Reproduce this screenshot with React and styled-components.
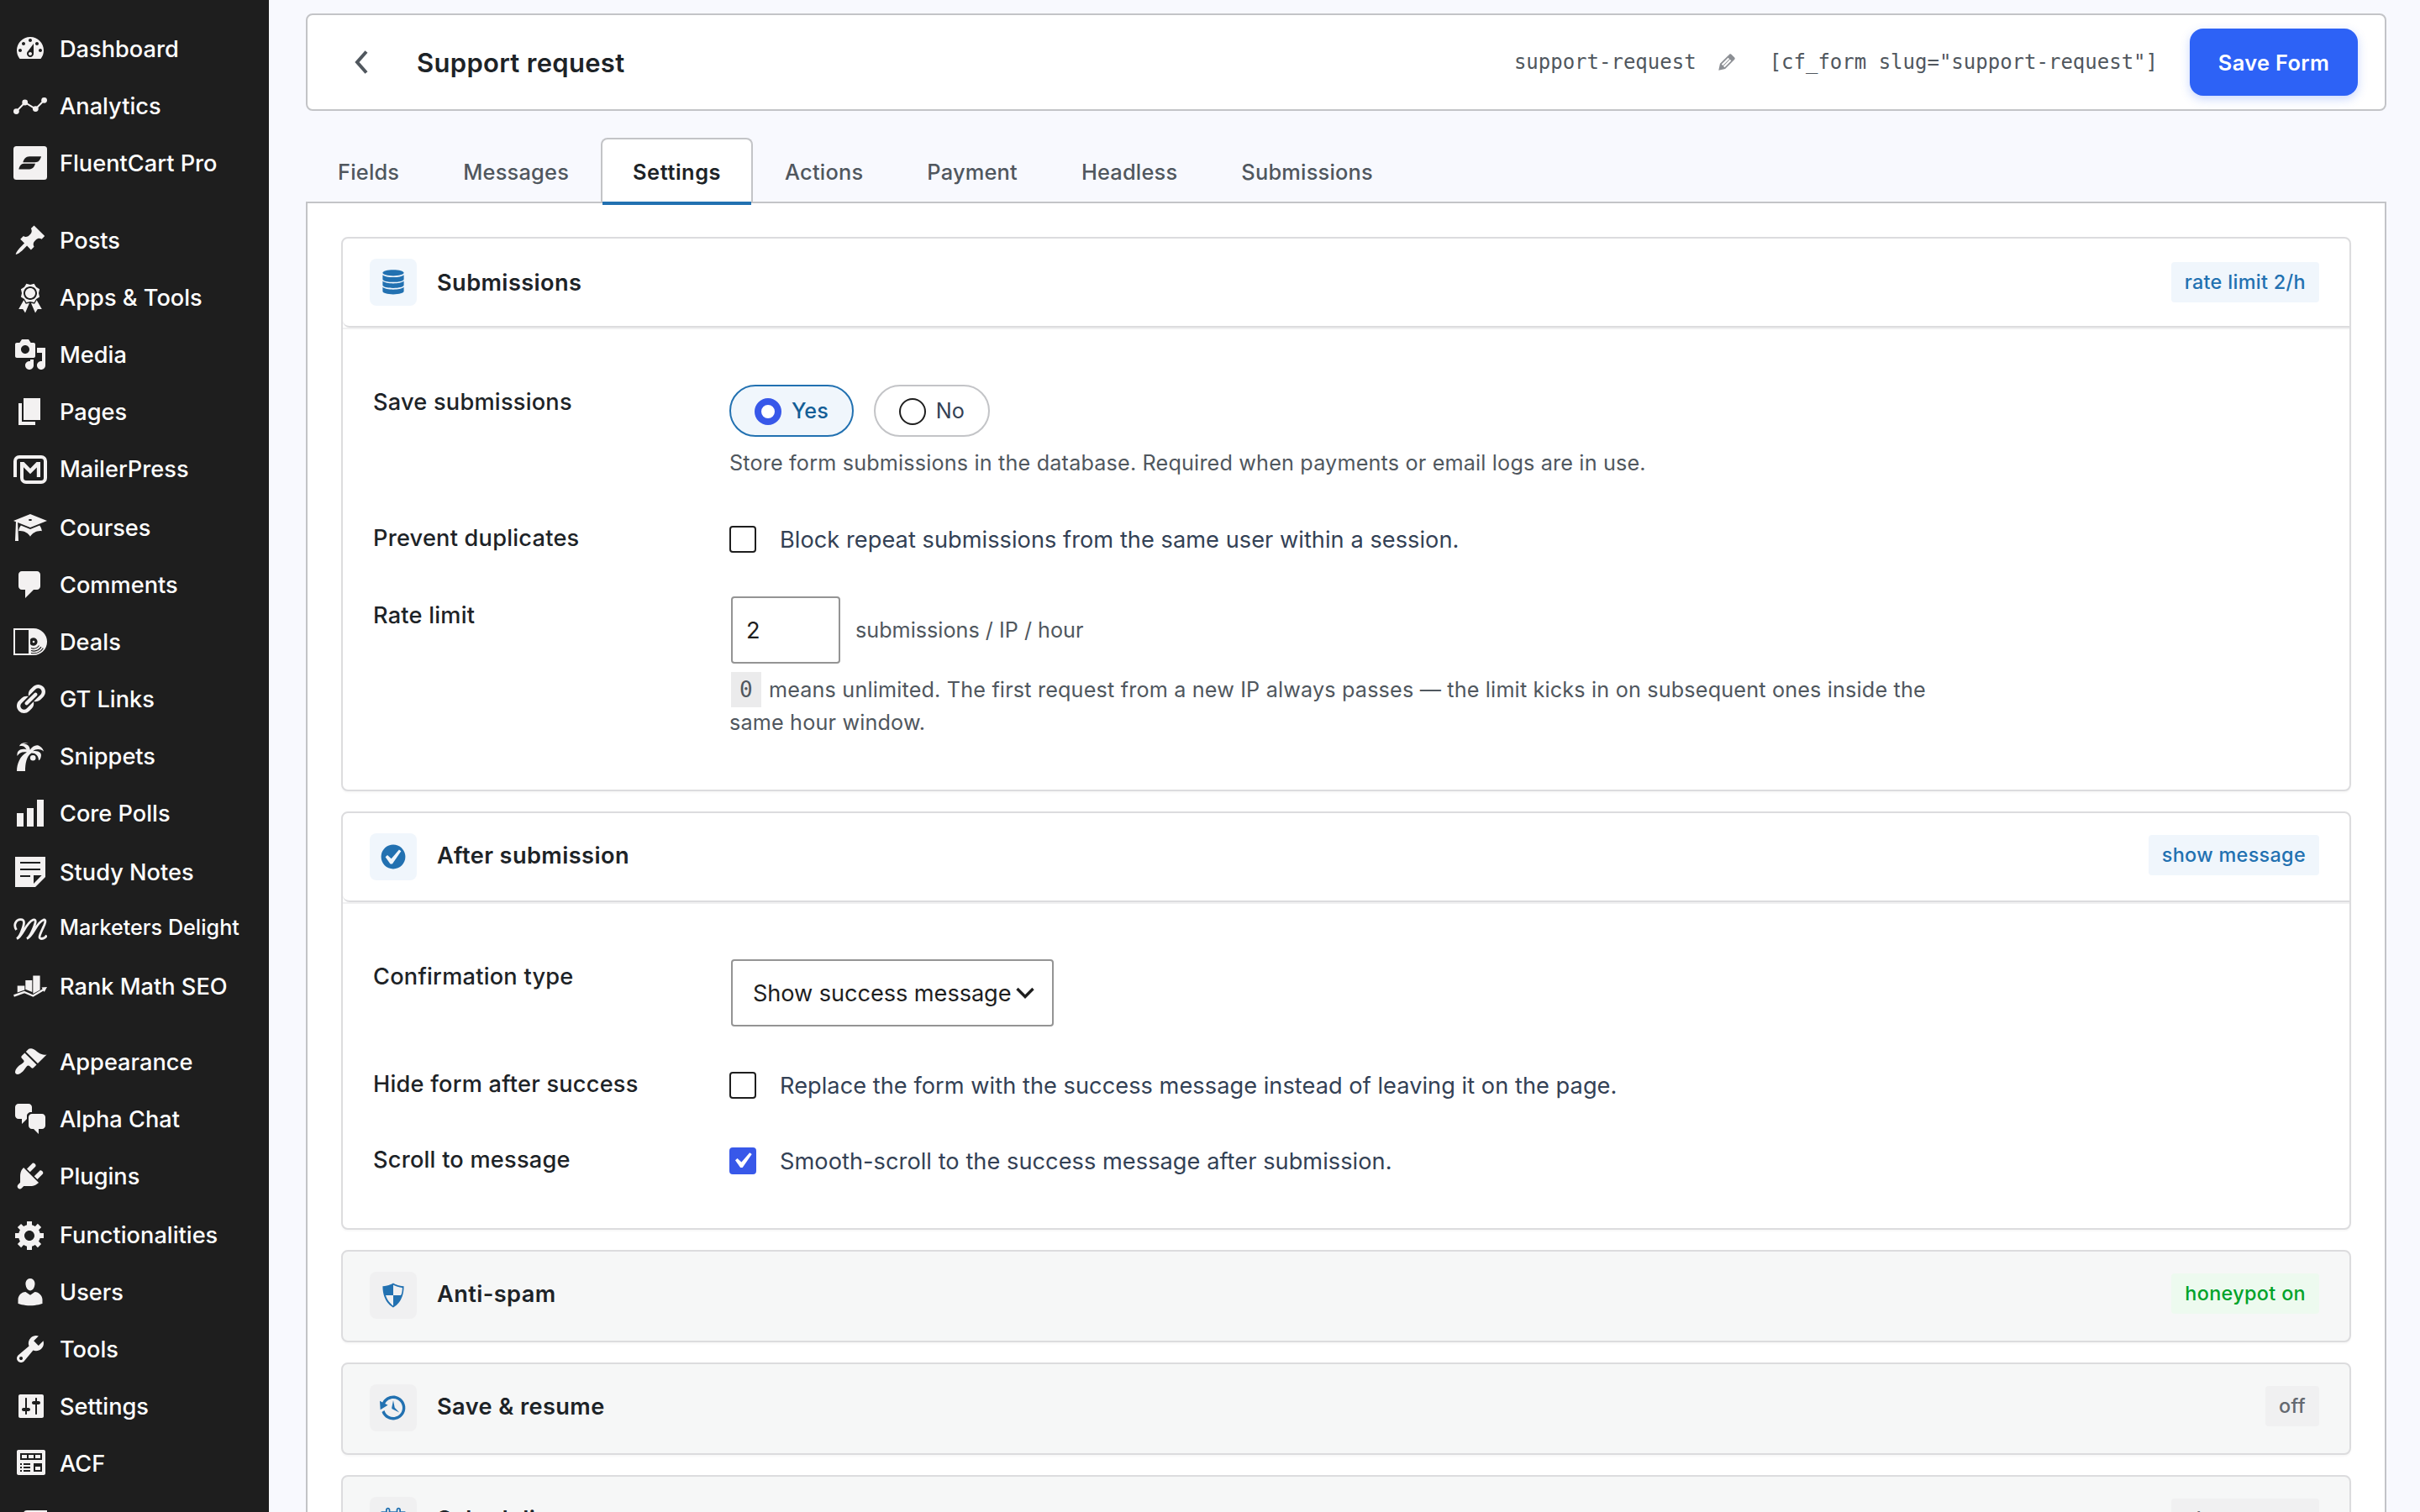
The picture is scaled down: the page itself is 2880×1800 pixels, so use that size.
import React, { useState } from "react";
import styled, { createGlobalStyle } from "styled-components";

const sans = '"Inter", "Liberation Sans", sans-serif';
const mono = '"DejaVu Sans Mono", "Liberation Mono", monospace';

const GlobalStyle = createGlobalStyle`
  * {
    box-sizing: border-box;
  }
  body {
    margin: 0;
    background: #f8f9fe;
    font-family: ${sans};
    overflow: hidden;
  }
`;

const Page = styled.div`
  display: flex;
  width: 2880px;
  height: 1800px;
  overflow: hidden;
`;

/* Sidebar */

const Sidebar = styled.nav`
  flex: none;
  width: 320px;
  padding-top: 24px;
  background: #1e1e1e;
`;

const MenuLink = styled.a`
  display: flex;
  align-items: center;
  gap: 15px;
  height: 68px;
  margin-top: ${props => props.$before || 0}px;
  padding-left: 16px;
  color: #fff;
  font-size: ${props => (props.$small ? "25.2px" : "27.2px")};
  font-weight: 500;
  line-height: 40px;
  white-space: nowrap;

  span {
    padding-top: ${props => (props.$small ? 0 : "2px")};
    padding-bottom: ${props => (props.$small ? "5px" : 0)};
  }
`;

const MenuIcon = styled.svg`
  flex: none;
  width: 40px;
  height: 40px;
  color: #f3f1f1;
  fill: currentColor;
`;

/* Header */

const Main = styled.main`
  flex: 1;
  padding: 16px 40px 0 44px;
`;

const Header = styled.header`
  display: flex;
  align-items: center;
  height: 116px;
  padding: 0 32px 0 56px;
  background: #fff;
  border: 2px solid #c3c4c7;
  border-radius: 8px;
`;

const BackIcon = styled.svg`
  width: 16px;
  height: 28px;
  fill: none;
  stroke: #50575e;
  stroke-width: 4;
`;

const Title = styled.h1`
  margin: 0 auto 0 58px;
  padding-top: 2px;
  color: #1d2327;
  font-size: 31px;
  font-weight: 600;
  letter-spacing: 0.3px;
  line-height: 40px;
`;

const Code = styled.code`
  color: #50575e;
  font-family: ${mono};
  font-size: 24px;
  line-height: 36px;
  white-space: pre;
`;

const PencilIcon = styled.svg`
  width: 28px;
  height: 28px;
  margin: 0 37px 0 22px;
  fill: #8c8f94;
`;

const SaveButton = styled.button`
  width: 200px;
  height: 80px;
  margin-left: 38px;
  padding: 0;
  border: 0;
  border-radius: 16px;
  background: #2d62f6;
  box-shadow: 0 4px 12px rgba(45, 98, 246, 0.25);
  color: #fff;
  font-family: ${sans};
  font-size: 25.4px;
  font-weight: 600;
  letter-spacing: 0.35px;
`;

/* Tabs */

const Tabs = styled.div`
  display: flex;
  margin-top: 32px;
`;

const Tab = styled.a`
  position: relative;
  height: 78px;
  padding: 21px 36px 0;
  border: 2px solid ${props => (props.$active ? "#c3c4c7" : "transparent")};
  border-bottom: 0;
  border-radius: 8px 8px 0 0;
  background: ${props => (props.$active ? "#fff" : "transparent")};
  color: ${props => (props.$active ? "#1d2327" : "#50575e")};
  font-size: 25.4px;
  font-weight: ${props => (props.$active ? 600 : 500)};
  letter-spacing: ${props => (props.$active ? "0.55px" : "0.2px")};
  line-height: 36px;

  &::after {
    content: "";
    display: ${props => (props.$active ? "block" : "none")};
    position: absolute;
    z-index: 1;
    left: 0;
    right: 0;
    bottom: -2px;
    height: 4px;
    background: #2271b1;
  }
`;

const Panel = styled.section`
  display: flex;
  flex-direction: column;
  gap: 24px;
  height: 1700px;
  padding: 40px;
  background: #fff;
  border: 2px solid #c3c4c7;
  margin-top: -2px;
`;

/* Cards */

const Card = styled.section`
  flex: none;
  border: 2px solid #dcdcde;
  border-radius: 8px;
  background: ${props => (props.$open ? "#fff" : "#f6f7f7")};
  box-shadow: 0 2px 2px rgba(0, 0, 0, 0.03);
`;

const CardHeader = styled.header`
  display: flex;
  align-items: flex-start;
  height: 106px;
  padding: 24px 36px 0 32px;
  border-bottom: 2px solid ${props => (props.$open ? "#dcdcde" : "transparent")};
  border-radius: 0 0 0 8px;
`;

const IconTile = styled.span`
  display: flex;
  align-items: center;
  justify-content: center;
  width: 56px;
  height: 56px;
  border-radius: 8px;
  background: ${props => (props.$open ? "#f0f6fc" : "#f0f0f1")};

  svg {
    width: 36px;
    height: 36px;
    fill: #2271b1;
  }
`;

const CardTitle = styled.h2`
  margin: ${props => props.$top}px auto 0 24px;
  color: #1d2327;
  font-size: 27.2px;
  font-weight: 600;
  letter-spacing: 0.4px;
  line-height: 40px;
`;

const badgeColors = {
  blue: ["#f0f6fc", "#2271b1"],
  green: ["#edfaef", "#00a32a"],
  gray: ["#f0f0f1", "#646970"]
};

const Badge = styled.span`
  height: 48px;
  margin-top: ${props => props.$top}px;
  padding: 0 16px;
  border-radius: 4px;
  background: ${props => badgeColors[props.$tone][0]};
  color: ${props => badgeColors[props.$tone][1]};
  font-size: 23.4px;
  font-weight: 500;
  letter-spacing: 0.33px;
  line-height: 48px;
`;

const CardBody = styled.div`
  display: flex;
  flex-direction: column;
  gap: 48px;
  padding: 66px 36px 60px;
  border-top: 2px solid #f0f0f1;
`;

const Row = styled.div`
  display: grid;
  grid-template-columns: 424px 1440px;
  height: ${props => props.$height || 42}px;
`;

const RowLabel = styled.div`
  padding-top: ${props => props.$top || 1}px;
  color: #1d2327;
  font-size: 27.2px;
  font-weight: 500;
  letter-spacing: 0.22px;
  line-height: 40px;
`;

const Pills = styled.div`
  display: flex;
  gap: 24px;
`;

const Pill = styled.label`
  display: flex;
  align-items: center;
  gap: 12px;
  height: 62px;
  padding: 0 28px;
  border: 2px solid ${props => (props.$checked ? "#2271b1" : "#c3c4c7")};
  border-radius: 31px;
  background: ${props => (props.$checked ? "#f0f6fc" : "#fff")};
  color: ${props => (props.$checked ? "#135e96" : "#334155")};
  font-size: 25.2px;
  font-weight: ${props => (props.$checked ? 500 : 400)};
  line-height: 36px;
`;

const Radio = styled.span`
  width: 32px;
  height: 32px;
  margin-top: 2px;
  border: ${props => (props.$checked ? "8px solid #3858e9" : "2px solid #1e1e1e")};
  border-radius: 50%;
  background: #fff;
`;

const Hint = styled.p`
  margin: 12px 0 0;
  color: #50575e;
  font-size: 25.2px;
  letter-spacing: 0.17px;
  line-height: 39px;
`;

const InlineCode = styled.code`
  display: inline-block;
  height: 42px;
  margin: -2px 2px -3px;
  padding: 0 10px;
  background: #ebebec;
  font-family: ${mono};
  font-size: 26px;
  letter-spacing: 0;
  line-height: 42px;
  vertical-align: baseline;
`;

const CheckLabel = styled.label`
  display: flex;
  align-items: flex-start;
  gap: 28px;
  color: #334155;
  font-size: 27.2px;
  letter-spacing: 0.04px;
  line-height: 44px;

  > span:last-child {
    padding-top: 1px;
  }
`;

const Box = styled.span`
  display: flex;
  align-items: center;
  justify-content: center;
  width: 32px;
  height: 32px;
  margin-top: 6px;
  border: 2px solid ${props => (props.$checked ? "#3858e9" : "#1e1e1e")};
  border-radius: 4px;
  background: ${props => (props.$checked ? "#3858e9" : "#fff")};

  svg {
    flex: none;
    width: 38px;
    height: 38px;
    margin-left: -2px;
    fill: #fff;
  }
`;

const NumberRow = styled.div`
  display: flex;
  align-items: center;
  gap: 18px;
  padding-left: 2px;
  color: #50575e;
  font-size: 25.2px;
`;

const NumberInput = styled.input`
  width: 130px;
  height: 80px;
  padding: 0 16px;
  border: 2px solid #949494;
  border-radius: 4px;
  background: #fff;
  color: #1e1e1e;
  font-family: ${sans};
  font-size: 27.2px;
`;

const Select = styled.div`
  display: flex;
  align-items: center;
  justify-content: space-between;
  width: 384px;
  height: 80px;
  margin-left: 2px;
  padding: 0 21px 0 24px;
  border: 2px solid #949494;
  border-radius: 4px;
  color: #1e1e1e;
  font-size: 27.2px;
  letter-spacing: -0.08px;

  svg {
    width: 22px;
    height: 14px;
    fill: none;
    stroke: #1e1e1e;
    stroke-width: 3.4;
  }
`;

const Glyph = ({ d }) => (
  <svg viewBox="0 0 20 20">
    <path d={d} fillRule="evenodd" />
  </svg>
);

// Menu icons on a 20 unit grid
const paths = {
  dashboard:
    "M3.76 16h12.48c1.1-1.37 1.76-3.11 1.76-5 0-4.42-3.58-8-8-8s-8 3.58-8 8c0 1.89.66 3.63 1.76 5zM10 4c.55 0 1 .45 1 1s-.45 1-1 1-1-.45-1-1 .45-1 1-1zM6 6c.55 0 1 .45 1 1s-.45 1-1 1-1-.45-1-1 .45-1 1-1zm8 0c.55 0 1 .45 1 1s-.45 1-1 1-1-.45-1-1 .45-1 1-1zm-5.37 5.55L12 7v6c0 1.1-.9 2-2 2s-2-.9-2-2c0-.57.24-1.08.63-1.45zM4 10c.55 0 1 .45 1 1s-.45 1-1 1-1-.45-1-1 .45-1 1-1zm12 0c.55 0 1 .45 1 1s-.45 1-1 1-1-.45-1-1 .45-1 1-1zm-5 3c0-.55-.45-1-1-1s-1 .45-1 1 .45 1 1 1 1-.45 1-1z",
  post:
    "M10.44 3.02l1.82-1.82 6.36 6.35-1.83 1.82c-1.05-.68-2.48-.57-3.41.36l-.75.75c-.92.93-1.04 2.35-.35 3.41l-1.83 1.82-2.41-2.41-2.8 2.79c-.42.42-3.38 2.71-3.8 2.29s1.86-3.39 2.28-3.81l2.79-2.79L4.1 9.36l1.83-1.82c1.05.69 2.48.57 3.4-.36l.75-.75c.93-.92 1.05-2.35.36-3.41z",
  award:
    "M4.46 5.16L5 7.46l-.54 2.29 2.01 1.24L7.7 13l2.3-.54 2.3.54 1.23-2.01 2.01-1.24L15 7.46l.54-2.3-2-1.24-1.24-2.01-2.3.55-2.29-.54-1.25 2zm5.55 6.34c-2.21 0-4-1.79-4-4 0-2.2 1.79-4 4-4 2.2 0 4 1.8 4 4 0 2.21-1.8 4-4 4zm-.02-1C8.33 10.5 7 9.16 7 7.5c0-1.65 1.33-3 2.99-3S13 5.85 13 7.5c0 1.66-1.35 3-3.01 3zm3.84 1.1l-1.28 2.24-2.08-.47L13 19.2l1.4-2.2h2.5zm-7.7.07l1.25 2.25 2.13-.51L7 19.2 5.6 17H3.1z",
  media:
    "M13 11V4c0-.55-.45-1-1-1h-1.67L9 1H5L3.67 3H2c-.55 0-1 .45-1 1v7c0 .55.45 1 1 1h10c.55 0 1-.45 1-1zM7 4.5c1.38 0 2.5 1.12 2.5 2.5S8.38 9.5 7 9.5 4.5 8.38 4.5 7 5.62 4.5 7 4.5zM14 6h5v10.5c0 1.38-1.12 2.5-2.5 2.5S14 17.88 14 16.5s1.12-2.5 2.5-2.5c.17 0 .34.02.5.05V9h-3V6zm-4 8.05V13h2v3.5c0 1.38-1.12 2.5-2.5 2.5S7 17.88 7 16.5 8.12 14 9.5 14c.17 0 .34.02.5.05z",
  page: "M6 15V2h10v13H6zm-1 1h8v2H3V5h2v11z",
  learn:
    "M10 10L2.54 7.02 3 18H1l.48-11.41L0 6l10-4 10 4zm0-5c-.55 0-1 .22-1 .5s.45.5 1 .5 1-.22 1-.5-.45-.5-1-.5zm0 6l5.57-2.23c.71.94 1.2 2.07 1.36 3.3-.3-.04-.61-.07-.93-.07-2.55 0-4.78 1.37-6 3.41C8.78 13.37 6.55 12 4 12c-.32 0-.63.03-.93.07.16-1.23.65-2.36 1.36-3.3z",
  comment: "M5 2h9c1.1 0 2 .9 2 2v7c0 1.1-.9 2-2 2h-2l-5 5v-5H5c-1.1 0-2-.9-2-2V4c0-1.1.9-2 2-2z",
  link:
    "M17.74 2.76c1.68 1.69 1.68 4.41 0 6.1l-1.53 1.52c-1.12 1.12-2.7 1.47-4.14 1.09l2.62-2.61.76-.77.76-.76c.84-.84.84-2.2 0-3.04-.84-.85-2.2-.85-3.04 0l-.77.76-3.38 3.38c-.37-1.44-.02-3.02 1.1-4.14l1.52-1.53c1.69-1.68 4.42-1.68 6.1 0zM8.59 13.43l5.34-5.34c.42-.42.42-1.1 0-1.52-.44-.43-1.13-.39-1.53 0l-5.33 5.34c-.42.42-.42 1.1 0 1.52.44.43 1.13.39 1.52 0zm-.76 2.29l4.14-4.15c.38 1.44.03 3.02-1.09 4.14l-1.52 1.53c-1.69 1.68-4.41 1.68-6.1 0-1.68-1.68-1.68-4.42 0-6.1l1.53-1.52c1.12-1.12 2.7-1.47 4.14-1.1l-4.14 4.15c-.85.84-.85 2.2 0 3.05.84.84 2.2.84 3.04 0z",
  bars: "M18 18V2h-4v16h4zm-6 0V7H8v11h4zm-6 0v-8H2v8h4z",
  note: "M1 1h18v12l-6 6H1zM4 4v1h12V4zM4 8v1h12V8zM4 12v1h6v-1zM12 12v5l4.8-5z",
  brush:
    "M14.48 11.06L7.41 3.99l1.5-1.5c.5-.56 2.3-.47 3.51.32 1.21.8 1.43 1.28 2.91 2.1 1.18.64 2.45 1.26 4.45.85zm-.71.71L6.7 4.7 4.93 6.47c-.39.39-.39 1.02 0 1.41l1.06 1.06c.39.39.39 1.03 0 1.42-.6.6-1.43 1.11-2.21 1.69-.35.26-.7.53-1.01.84C1.43 14.23.4 16.08 1.4 17.07c.99 1 2.84-.03 4.18-1.36.31-.31.58-.66.85-1.02.57-.78 1.08-1.61 1.69-2.21.39-.39 1.02-.39 1.41 0l1.06 1.06c.39.39 1.02.39 1.41 0z",
  chat:
    "M11 6h-.82C9.07 6 8 7.2 8 8.16V10l-3 3v-3H3c-1.1 0-2-.9-2-2V3c0-1.1.9-2 2-2h6c1.1 0 2 .9 2 2v3zm0 1h6c1.1 0 2 .9 2 2v5c0 1.1-.9 2-2 2h-2v3l-3-3h-1c-1.1 0-2-.9-2-2V9c0-1.1.9-2 2-2z",
  plug:
    "M13.11 4.36L9.87 7.6 8 5.73l3.24-3.24c.35-.34 1.05-.2 1.56.32.52.51.66 1.21.31 1.55zm-8 1.77l.91-1.12 9.01 9.01-1.19.84c-.71.71-2.63 1.16-3.82 1.16H6.14L4.9 17.26c-.59.59-1.54.59-2.12 0-.59-.58-.59-1.53 0-2.12l1.24-1.24v-3.88c0-1.13.4-3.19 1.09-3.89zm7.26 3.97l3.24-3.24c.34-.35 1.04-.21 1.55.31.52.51.66 1.21.31 1.55l-3.24 3.25z",
  gear:
    "M18 12h-2.18c-.17.7-.44 1.35-.81 1.93l1.54 1.54-2.1 2.1-1.54-1.54c-.58.36-1.23.63-1.91.79V19H8v-2.18c-.68-.16-1.33-.43-1.91-.79l-1.54 1.54-2.12-2.12 1.54-1.54c-.36-.58-.63-1.23-.79-1.91H1V9.03h2.17c.16-.7.44-1.35.8-1.94L2.43 5.55l2.1-2.1 1.54 1.54c.58-.37 1.24-.64 1.93-.81V2h3v2.18c.68.16 1.33.43 1.91.79l1.54-1.54 2.12 2.12-1.54 1.54c.36.59.64 1.24.8 1.94H18V12zm-8.5 1.5c1.66 0 3-1.34 3-3s-1.34-3-3-3-3 1.34-3 3 1.34 3 3 3z",
  user:
    "M10 9.25c-2.27 0-2.73-3.44-2.73-3.44C7 4.02 7.82 2 9.97 2c2.16 0 2.98 2.02 2.71 3.81 0 0-.41 3.44-2.68 3.44zm0 2.57L12.72 10c2.39 0 4.52 2.33 4.52 4.53v2.49s-3.65 1.13-7.24 1.13c-3.65 0-7.24-1.13-7.24-1.13v-2.49c0-2.25 1.94-4.48 4.47-4.48z",
  wrench:
    "M16.68 9.77c-1.34 1.34-3.3 1.67-4.95.99l-5.41 6.52c-.99.99-2.59.99-3.58 0s-.99-2.59 0-3.57l6.52-5.42c-.68-1.65-.35-3.61.99-4.95 1.28-1.28 3.12-1.62 4.72-1.06l-2.89 2.89 2.82 2.82 2.86-2.87c.53 1.58.18 3.39-1.08 4.65zM3.81 16.21c.4.39 1.04.39 1.43 0 .4-.4.4-1.04 0-1.43-.39-.4-1.03-.4-1.43 0-.39.39-.39 1.03 0 1.43z",
  sliders:
    "M18 16V4c0-.55-.45-1-1-1H4c-.55 0-1 .45-1 1v12c0 .55.45 1 1 1h13c.55 0 1-.45 1-1zM8 11h1c.55 0 1 .45 1 1s-.45 1-1 1H8v1.5c0 .28-.22.5-.5.5s-.5-.22-.5-.5V13H6c-.55 0-1-.45-1-1s.45-1 1-1h1V5.5c0-.28.22-.5.5-.5s.5.22.5.5V11zm5-2h-1c-.55 0-1-.45-1-1s.45-1 1-1h1V5.5c0-.28.22-.5.5-.5s.5.22.5.5V7h1c.55 0 1 .45 1 1s-.45 1-1 1h-1v5.5c0 .28-.22.5-.5.5s-.5-.22-.5-.5V9z",
  widgets:
    "M19 16V3c0-.55-.45-1-1-1H3c-.55 0-1 .45-1 1v13c0 .55.45 1 1 1h15c.55 0 1-.45 1-1zM4 4h13v4H4zM5 5v2h3V5zM9 5v2h3V5zM13 5v2h3V5zM4 10h1v1H4zM6 10h4v1H6zM12 10h5v5h-5zM13 12v2h3v-2zM4 12h1v1H4zM6 12h4v1H6zM4 14h1v1H4zM6 14h4v1H6z"
};

const cardPaths = {
  database:
    "M10 5.8c3.9 0 7-.85 7-2s-3.1-2-7-2-7 .85-7 2 3.1 2 7 2zM3 5.1c1.2 1.1 4 1.6 7 1.6s5.8-.5 7-1.6V8c0 1.1-3.1 1.9-7 1.9S3 9.1 3 8zM3 9.2c1.2 1.1 4 1.6 7 1.6s5.8-.5 7-1.6V12c0 1.1-3.1 1.9-7 1.9S3 13.1 3 12zM3 13.2c1.2 1.1 4 1.6 7 1.6s5.8-.5 7-1.6V16c0 1.1-3.1 2-7 2s-7-.9-7-2z",
  check:
    "M10 2c-4.42 0-8 3.58-8 8s3.58 8 8 8 8-3.58 8-8-3.58-8-8-8zm-.615 12.66h-1.34l-3.24-4.54 1.341-1.25 2.569 2.4 5.141-5.931 1.34.94-5.811 8.381z",
  shield:
    "M10 2s3 2 7 2c0 11-7 14-7 14S3 15 3 4c4 0 7-2 7-2zm0 8h5s1-1 1-5c0 0-5-1-6-2v7H5c1 4 5 7 5 7v-7z",
  backup:
    "M13.65 2.88c3.93 2.01 5.48 6.84 3.47 10.77s-6.83 5.48-10.77 3.47c-1.87-.96-3.2-2.56-3.86-4.4l1.64-1.03c.45 1.57 1.52 2.95 3.08 3.76 3.01 1.54 6.69.35 8.23-2.66 1.55-3.01.36-6.69-2.65-8.24C9.78 3.01 6.1 4.2 4.56 7.21l1.88.97-4.95 3.08-.39-5.82 1.78.91C4.9 2.4 9.75.89 13.65 2.88zm-4.36 7.83C9.11 10.53 9 10.28 9 10c0-.07.03-.12.04-.19h-.01L10 5l.97 4.81L14 13l-4.5-2.12.02-.02c-.08-.04-.16-.09-.23-.15z",
  calendar:
    "M15 4h3v15H2V4h3V3c0-.41.15-.76.44-1.06.29-.29.65-.44 1.06-.44s.77.15 1.06.44c.29.3.44.65.44 1.06v1h4V3c0-.41.15-.76.44-1.06.29-.29.65-.44 1.06-.44s.77.15 1.06.44c.29.3.44.65.44 1.06v1zM6 3v2.5c0 .3.2.5.5.5s.5-.2.5-.5V3c0-.3-.2-.5-.5-.5s-.5.2-.5.5zM13 3v2.5c0 .3.2.5.5.5s.5-.2.5-.5V3c0-.3-.2-.5-.5-.5s-.5.2-.5.5zM3 8v10h14V8z"
};

const editPath =
  "M13.89 3.39l2.71 2.72c.46.46.42 1.24.03 1.64l-8.01 8.02-5.56 1.16 1.16-5.58s7.6-7.63 7.99-8.03c.39-.39 1.22-.39 1.68.07zm-2.73 2.79l-5.59 5.61 1.11 1.11 5.54-5.65zm-2.97 8.23l5.58-5.6-1.07-1.08-5.59 5.6z";

// Plugin logos on a 40 unit grid
const logos = {
  analytics: (
    <>
      <path d="M3.3 26.7L13.7 16l12.6 7.7L36.7 13.3" fill="none" stroke="currentColor" strokeWidth="2" />
      <circle cx="3.4" cy="26.6" r="3.4" />
      <circle cx="13.7" cy="16" r="3.4" />
      <circle cx="26.3" cy="23.6" r="3.4" />
      <circle cx="36.6" cy="13.3" r="3.4" />
    </>
  ),
  fluent: (
    <>
      <rect width="40" height="40" rx="3.5" />
      <path d="M19 12.3H33C31.8 16.5 30 19.3 25.5 19.3H11.3C12.5 15.5 14.5 12.3 19 12.3z" fill="#1e1e1e" />
      <path d="M12.5 20.8H26C24.8 24.6 23 27.4 19 27.4H6.3C7.3 23.8 8.8 20.8 12.5 20.8z" fill="#1e1e1e" />
    </>
  ),
  mailer: (
    <>
      <path
        d="M2 30V11a5 5 0 0 1 5-5h26a5 5 0 0 1 5 5v20a5 5 0 0 1-5 5H15a5 5 0 0 1-5-5V14"
        fill="none"
        stroke="currentColor"
        strokeWidth="4"
      />
      <path d="M8 12h4.5l7.5 7.8L27.5 12H32v18h-4.2V18.5L20 26.3l-8-8V30H8z" />
    </>
  ),
  deals: (
    <>
      <path d="M0 4h20v32H0zM2 6v28h16V6z" fillRule="evenodd" />
      <path d="M20 4h4a16 16 0 0 1 0 32h-4z" />
      <g fill="none" stroke="#1e1e1e">
        <path d="M20 17A4.8 4.8 0 1 1 20 23z" fill="#1e1e1e" stroke="none" />
        <path d="M30.5 24.5A8 8 0 0 1 21 27.5" strokeWidth="1.2" />
        <path d="M33 26.2A11 11 0 0 1 21 30.5" strokeWidth="1.2" />
        <path d="M35.4 27.6A13.8 13.8 0 0 1 21 33.5" strokeWidth="1.1" />
      </g>
      <circle cx="24" cy="20" r="1.3" />
    </>
  ),
  palm: (
    <>
      <path d="M9.5 5.3C15 5 19.500 7.2 19.8 12.8C22.5 8 28 5.5 31.5 8.5C34 10 35.5 12.5 36 14.5C31.5 11 26.5 11.5 23.2 14.2C30 13 34.2 16.5 32.7 21C32.2 23.2 31.5 24.6 30 25.3C30 19.8 26.5 16.3 21.5 16.5C15.5 20 14 29 14 38H4C4.3 29 7.5 20.5 16 15.6C10.5 14.5 6.8 16.5 4.6 20C3.5 13.5 8.5 10.5 15.5 12.2C13.5 8.5 11 7.2 7 8.3C8 4.5 13 3.5 18 4.8z" />
      <circle cx="23.2" cy="22.3" r="3.3" />
    </>
  ),
  script: (
    <path
      d="M3.5 21C-.5 15 3 8.8 8.5 8.6C14.5 8.5 12.5 15 10.5 20.5C9 25 7.5 29.5 4 31.5C11 29 14.5 12.5 23.5 9C28 8 26 13.5 24 18.5C21.8 24 19.5 29.5 16 31.5C24 28 27 12 36 9C39.5 8.5 37.5 14 35 19C32 25.5 29 31.5 33 31.5C36 31.5 38 30.5 39.5 27.5"
      fill="none"
      stroke="currentColor"
      strokeWidth="2.8"
    />
  ),
  rank: (
    <>
      <path d="M4.7 19.5h8.6v5l-8.6 3zM14.3 13h8v14l-8-3.2zM23.3 7.5h8.3v17l-8.3 4.500z" />
      <path d="M.5 31.5L12.8 27l10.5 4.5L36 24" fill="none" stroke="currentColor" strokeWidth="2.4" />
      <path d="M33.5 21.5L40 21l-3.3 6z" />
    </>
  ),
  cut: <path d="M16 8h24v24H12V12a4 4 0 0 1 4-4z" />
};

const menu = [
  { label: "Dashboard", d: paths.dashboard },
  { label: "Analytics", logo: logos.analytics },
  { label: "FluentCart Pro", logo: logos.fluent },
  { label: "Posts", d: paths.post, before: 24 },
  { label: "Apps & Tools", d: paths.award },
  { label: "Media", d: paths.media },
  { label: "Pages", d: paths.page },
  { label: "MailerPress", logo: logos.mailer },
  { label: "Courses", d: paths.learn, before: 2 },
  { label: "Comments", d: paths.comment },
  { label: "Deals", logo: logos.deals },
  { label: "GT Links", d: paths.link },
  { label: "Snippets", logo: logos.palm },
  { label: "Core Polls", d: paths.bars },
  { label: "Study Notes", d: paths.note, before: 2 },
  { label: "Marketers Delight", logo: logos.script, small: true },
  { label: "Rank Math SEO", logo: logos.rank },
  { label: "Appearance", d: paths.brush, before: 22 },
  { label: "Alpha Chat", d: paths.chat },
  { label: "Plugins", d: paths.plug },
  { label: "Functionalities", d: paths.gear, before: 2 },
  { label: "Users", d: paths.user },
  { label: "Tools", d: paths.wrench },
  { label: "Settings", d: paths.sliders },
  { label: "ACF", d: paths.widgets },
  { label: "", logo: logos.cut }
];

const tabs = ["Fields", "Messages", "Settings", "Actions", "Payment", "Headless", "Submissions"];

const SettingsCard = ({ title, icon, badge, tone, offset = 0, children }) => {
  const open = Boolean(children);
  return (
    <Card $open={open}>
      <CardHeader $open={open}>
        <IconTile $open={open}>
          <Glyph d={icon} />
        </IconTile>
        <CardTitle $top={9 + offset}>{title}</CardTitle>
        <Badge $tone={tone} $top={4 + offset}>
          {badge}
        </Badge>
      </CardHeader>
      {open && <CardBody>{children}</CardBody>}
    </Card>
  );
};

const CheckOption = ({ checked, onToggle, children }) => (
  <CheckLabel onClick={onToggle}>
    <Box $checked={checked}>
      {checked && <Glyph d="M14.83 4.89l1.34.94-5.81 8.38H9.02L5.78 9.67l1.34-1.25 2.57 2.4z" />}
    </Box>
    <span>{children}</span>
  </CheckLabel>
);

const App = () => {
  const [activeTab, setActiveTab] = useState("Settings");
  const [save, setSave] = useState(true);
  const [limit, setLimit] = useState("2");
  const [checks, setChecks] = useState({ duplicates: false, hide: false, scroll: true });

  const toggle = name => setChecks({ ...checks, [name]: !checks[name] });

  return (
    <Page>
      <GlobalStyle />
      <Sidebar>
        {menu.map(item => (
          <MenuLink key={item.label} $before={item.before} $small={item.small}>
            <MenuIcon viewBox={item.d ? "0 0 20 20" : "0 0 40 40"}>
              {item.d ? <path d={item.d} fillRule="evenodd" /> : item.logo}
            </MenuIcon>
            <span>{item.label}</span>
          </MenuLink>
        ))}
      </Sidebar>

      <Main>
        <Header>
          <BackIcon viewBox="0 0 16 28">
            <path d="M14 1.5L3 14l11 12.5" />
          </BackIcon>
          <Title>Support request</Title>
          <Code>support-request</Code>
          <PencilIcon viewBox="0 0 20 20">
            <path d={editPath} fillRule="evenodd" />
          </PencilIcon>
          <Code>[cf_form slug="support-request"]</Code>
          <SaveButton>Save Form</SaveButton>
        </Header>

        <Tabs>
          {tabs.map(tab => (
            <Tab key={tab} $active={tab === activeTab} onClick={() => setActiveTab(tab)}>
              {tab}
            </Tab>
          ))}
        </Tabs>

        <Panel>
          <SettingsCard title="Submissions" icon={cardPaths.database} badge="rate limit 2/h" tone="blue">
            <Row $height={114}>
              <RowLabel>Save submissions</RowLabel>
              <div>
                <Pills>
                  <Pill $checked={save} onClick={() => setSave(true)}>
                    <Radio $checked={save} />
                    Yes
                  </Pill>
                  <Pill $checked={!save} onClick={() => setSave(false)}>
                    <Radio $checked={!save} />
                    No
                  </Pill>
                </Pills>
                <Hint>
                  Store form submissions in the database. Required when payments or email logs are in use.
                </Hint>
              </div>
            </Row>
            <Row>
              <RowLabel>Prevent duplicates</RowLabel>
              <CheckOption checked={checks.duplicates} onToggle={() => toggle("duplicates")}>
                Block repeat submissions from the same user within a session.
              </CheckOption>
            </Row>
            <Row $height={170}>
              <RowLabel $top={3}>Rate limit</RowLabel>
              <div>
                <NumberRow>
                  <NumberInput value={limit} onChange={event => setLimit(event.target.value)} />
                  submissions / IP / hour
                </NumberRow>
                <Hint>
                  <InlineCode>0</InlineCode> means unlimited. The first request from a new IP always passes — the
                  limit kicks in on subsequent ones inside the
                  <br />
                  same hour window.
                </Hint>
              </div>
            </Row>
          </SettingsCard>

          <SettingsCard title="After submission" icon={cardPaths.check} badge="show message" tone="blue" offset={-2}>
            <Row $height={80}>
              <RowLabel>Confirmation type</RowLabel>
              <Select>
                Show success message
                <svg viewBox="0 0 22 14">
                  <path d="M1.5 2L11 11.5L20.5 2" />
                </svg>
              </Select>
            </Row>
            <Row>
              <RowLabel>Hide form after success</RowLabel>
              <CheckOption checked={checks.hide} onToggle={() => toggle("hide")}>
                Replace the form with the success message instead of leaving it on the page.
              </CheckOption>
            </Row>
            <Row>
              <RowLabel>Scroll to message</RowLabel>
              <CheckOption checked={checks.scroll} onToggle={() => toggle("scroll")}>
                Smooth-scroll to the success message after submission.
              </CheckOption>
            </Row>
          </SettingsCard>

          <SettingsCard title="Anti-spam" icon={cardPaths.shield} badge="honeypot on" tone="green" offset={-2} />
          <SettingsCard title="Save & resume" icon={cardPaths.backup} badge="off" tone="gray" offset={-2} />
          <SettingsCard title="Scheduling" icon={cardPaths.calendar} badge="always open" tone="gray" offset={-2} />
        </Panel>
      </Main>
    </Page>
  );
};

export default App;
